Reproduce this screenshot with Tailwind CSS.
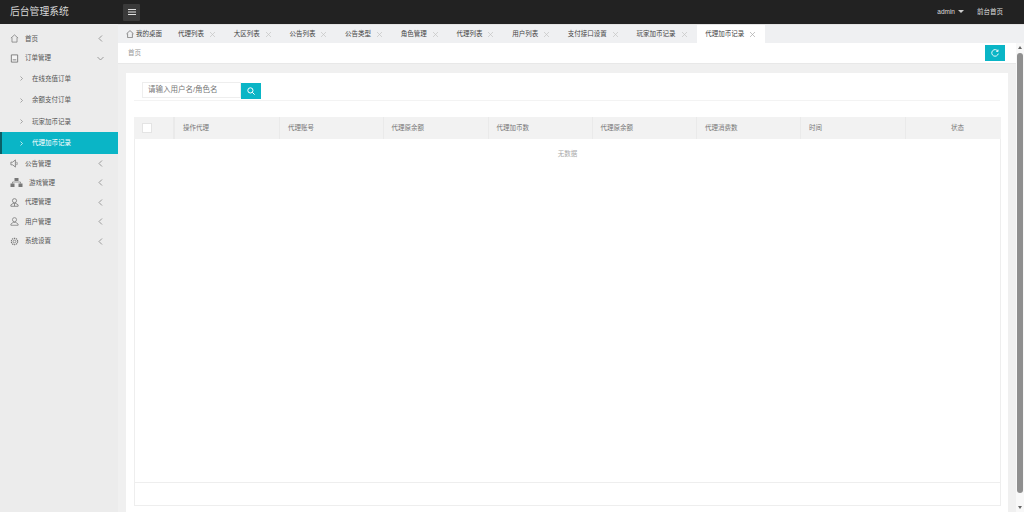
<!DOCTYPE html>
<html lang="zh">
<head>
<meta charset="utf-8">
<title>后台管理系统</title>
<script src="https://cdn.jsdelivr.net/npm/@tailwindcss/browser@4"></script>
</head>
<body class="overflow-hidden">
<div class="flex h-[512px] w-[1024px] flex-col overflow-hidden bg-[#f0f0f0] font-['Liberation_Sans','Noto_Sans_CJK_SC',sans-serif] text-[6.5px] text-[#555]">
  <header class="flex h-6 shrink-0 items-center bg-[#222222] text-[#ddd]">
    <div class="w-[123px] pl-[10px] text-[9.8px] text-[#d8d8d8]">后台管理系统</div>
    <button class="flex h-[17px] w-[17px] items-center justify-center rounded-[1px] bg-[#3a3a3a]">
      <svg class="h-[8px] w-[8px]" viewBox="0 0 8 8" fill="none" stroke="#e0e0e0" stroke-width="1"><path d="M0 1.5h8M0 4h8M0 6.5h8"/></svg>
    </button>
    <div class="ml-auto flex items-center pr-[21px]">
      <span class="font-['Liberation_Sans',sans-serif] text-[6.5px]">admin</span>
      <span class="ml-[3px] mb-[1px] h-0 w-0 border-x-[3px] border-t-[3px] border-x-transparent border-t-[#ccc]"></span>
      <span class="ml-[13px]">前台首页</span>
    </div>
  </header>
  <div class="flex min-h-0 flex-1">
    <aside class="w-[118px] shrink-0 bg-[#ececec] pt-[5px]">
      <div class="flex h-[19.4px] items-center pl-[10px] pr-[15px]">
        <svg class="h-[9px] w-[9px] shrink-0" viewBox="0 0 10 10" fill="none" stroke="#777" stroke-width="0.8"><path d="M1 4.5 5 1l4 3.5M2.2 4v5h5.6V4"/></svg>
        <span class="ml-[6px]">首页</span>
        <svg class="ml-auto h-[7px] w-[5px]" viewBox="0 0 5 7" fill="none" stroke="#888" stroke-width="0.8"><path d="M4 .5 1 3.5l3 3"/></svg>
      </div>
      <div class="flex h-[19.4px] items-center pl-[10px] pr-[14px]">
        <svg class="h-[9px] w-[9px] shrink-0" viewBox="0 0 10 10" fill="#f4f4f4" stroke="#777" stroke-width="1"><path d="M1.5 1h7v8h-7zM3 6.5h4"/></svg>
        <span class="ml-[6px]">订单管理</span>
        <svg class="ml-auto h-[5px] w-[7px]" viewBox="0 0 7 5" fill="none" stroke="#888" stroke-width="0.8"><path d="M.5 1 3.5 4l3-3"/></svg>
      </div>
      <div class="flex h-[21.5px] items-center pl-[20px]">
        <svg class="h-[5px] w-[3px]" viewBox="0 0 3 5" fill="none" stroke="#888" stroke-width="0.7"><path d="M.5.5l2 2-2 2"/></svg>
        <span class="ml-[9px]">在线充值订单</span>
      </div>
      <div class="flex h-[21.5px] items-center pl-[20px]">
        <svg class="h-[5px] w-[3px]" viewBox="0 0 3 5" fill="none" stroke="#888" stroke-width="0.7"><path d="M.5.5l2 2-2 2"/></svg>
        <span class="ml-[9px]">余额支付订单</span>
      </div>
      <div class="flex h-[21.5px] items-center pl-[20px]">
        <svg class="h-[5px] w-[3px]" viewBox="0 0 3 5" fill="none" stroke="#888" stroke-width="0.7"><path d="M.5.5l2 2-2 2"/></svg>
        <span class="ml-[9px]">玩家加币记录</span>
      </div>
      <div class="flex h-[21.5px] items-center border-l-2 border-l-[#0a5f66] bg-[#0ab5c6] pl-[18px] text-white">
        <svg class="h-[5px] w-[3px]" viewBox="0 0 3 5" fill="none" stroke="#fff" stroke-width="0.7"><path d="M.5.5l2 2-2 2"/></svg>
        <span class="ml-[9px]">代理加币记录</span>
      </div>
      <div class="flex h-[19.4px] items-center pl-[10px] pr-[15px]">
        <svg class="h-[9px] w-[9px] shrink-0" viewBox="0 0 10 10" fill="none" stroke="#777" stroke-width="0.9"><path d="M1 3.5h2L6 1v8L3 6.5H1zM7.5 3.2q1 1.8 0 3.6"/></svg>
        <span class="ml-[6px]">公告管理</span>
        <svg class="ml-auto h-[7px] w-[5px]" viewBox="0 0 5 7" fill="none" stroke="#888" stroke-width="0.8"><path d="M4 .5 1 3.5l3 3"/></svg>
      </div>
      <div class="flex h-[19.4px] items-center pl-[10px] pr-[15px]">
        <svg class="h-[9px] w-[13px] shrink-0" viewBox="0 0 13 9" fill="#777"><path d="M4.5 0h4v3h-4zM.5 5.5h4V9h-4zM8.5 5.5h4V9h-4z"/><path d="M2.5 5.5V4h8v1.5" fill="none" stroke="#777" stroke-width=".7"/></svg>
        <span class="ml-[6px]">游戏管理</span>
        <svg class="ml-auto h-[7px] w-[5px]" viewBox="0 0 5 7" fill="none" stroke="#888" stroke-width="0.8"><path d="M4 .5 1 3.5l3 3"/></svg>
      </div>
      <div class="flex h-[19.4px] items-center pl-[10px] pr-[15px]">
        <svg class="h-[9px] w-[9px] shrink-0" viewBox="0 0 10 10" fill="none" stroke="#777" stroke-width="0.9"><circle cx="5" cy="3" r="2.3"/><path d="M1 9.2V7.6L3.5 6h3L9 7.6v1.6zM5 6.5v2.5"/></svg>
        <span class="ml-[6px]">代理管理</span>
        <svg class="ml-auto h-[7px] w-[5px]" viewBox="0 0 5 7" fill="none" stroke="#888" stroke-width="0.8"><path d="M4 .5 1 3.5l3 3"/></svg>
      </div>
      <div class="flex h-[19.4px] items-center pl-[10px] pr-[15px]">
        <svg class="h-[9px] w-[9px] shrink-0" viewBox="0 0 10 10" fill="none" stroke="#777" stroke-width="0.8"><circle cx="5" cy="3" r="2.3"/><path d="M1 9.2V7.8L3.5 6h3L9 7.8v1.4z"/></svg>
        <span class="ml-[6px]">用户管理</span>
        <svg class="ml-auto h-[7px] w-[5px]" viewBox="0 0 5 7" fill="none" stroke="#888" stroke-width="0.8"><path d="M4 .5 1 3.5l3 3"/></svg>
      </div>
      <div class="flex h-[19.4px] items-center pl-[10px] pr-[15px]">
        <svg class="h-[9px] w-[9px] shrink-0" viewBox="0 0 10 10" fill="none" stroke="#777"><circle cx="5" cy="5" r="1.5" stroke-width=".8"/><circle cx="5" cy="5" r="3.5" stroke-width="1.3" stroke-dasharray="1.4 .8"/></svg>
        <span class="ml-[6px]">系统设置</span>
        <svg class="ml-auto h-[7px] w-[5px]" viewBox="0 0 5 7" fill="none" stroke="#888" stroke-width="0.8"><path d="M4 .5 1 3.5l3 3"/></svg>
      </div>
    </aside>
    <main class="flex min-w-0 flex-1 flex-col">
      <nav class="flex h-[19px] shrink-0 items-end border-t border-t-[#e4e4e4] bg-[#eff0f2] text-[#444]">
        <div class="flex h-[18px] w-[52px] items-center pl-[8px]">
          <svg class="h-[8px] w-[8px] shrink-0" viewBox="0 0 8 8" fill="none" stroke="#666" stroke-width=".7"><path d="M.5 3.8 4 .6l3.5 3.2M1.6 3.4v4.2h4.8V3.4"/></svg>
          <span class="ml-[2px]">我的桌面</span>
        </div>
        <div class="flex h-[18px] items-center pl-[8px] pr-[9.7px]"><span>代理列表</span><svg class="ml-[5px] h-[7px] w-[7px]" viewBox="0 0 7 7" stroke="#c4c4c4" stroke-width=".7"><path d="M1 1l5 5M6 1 1 6"/></svg></div>
        <div class="flex h-[18px] items-center pl-[8px] pr-[9.7px]"><span>大区列表</span><svg class="ml-[5px] h-[7px] w-[7px]" viewBox="0 0 7 7" stroke="#c4c4c4" stroke-width=".7"><path d="M1 1l5 5M6 1 1 6"/></svg></div>
        <div class="flex h-[18px] items-center pl-[8px] pr-[9.7px]"><span>公告列表</span><svg class="ml-[5px] h-[7px] w-[7px]" viewBox="0 0 7 7" stroke="#c4c4c4" stroke-width=".7"><path d="M1 1l5 5M6 1 1 6"/></svg></div>
        <div class="flex h-[18px] items-center pl-[8px] pr-[9.7px]"><span>公告类型</span><svg class="ml-[5px] h-[7px] w-[7px]" viewBox="0 0 7 7" stroke="#c4c4c4" stroke-width=".7"><path d="M1 1l5 5M6 1 1 6"/></svg></div>
        <div class="flex h-[18px] items-center pl-[8px] pr-[9.7px]"><span>角色管理</span><svg class="ml-[5px] h-[7px] w-[7px]" viewBox="0 0 7 7" stroke="#c4c4c4" stroke-width=".7"><path d="M1 1l5 5M6 1 1 6"/></svg></div>
        <div class="flex h-[18px] items-center pl-[8px] pr-[9.7px]"><span>代理列表</span><svg class="ml-[5px] h-[7px] w-[7px]" viewBox="0 0 7 7" stroke="#c4c4c4" stroke-width=".7"><path d="M1 1l5 5M6 1 1 6"/></svg></div>
        <div class="flex h-[18px] items-center pl-[8px] pr-[9.7px]"><span>用户列表</span><svg class="ml-[5px] h-[7px] w-[7px]" viewBox="0 0 7 7" stroke="#c4c4c4" stroke-width=".7"><path d="M1 1l5 5M6 1 1 6"/></svg></div>
        <div class="flex h-[18px] items-center pl-[8px] pr-[9.7px]"><span>支付接口设置</span><svg class="ml-[5px] h-[7px] w-[7px]" viewBox="0 0 7 7" stroke="#c4c4c4" stroke-width=".7"><path d="M1 1l5 5M6 1 1 6"/></svg></div>
        <div class="flex h-[18px] items-center pl-[8px] pr-[9.7px]"><span>玩家加币记录</span><svg class="ml-[5px] h-[7px] w-[7px]" viewBox="0 0 7 7" stroke="#c4c4c4" stroke-width=".7"><path d="M1 1l5 5M6 1 1 6"/></svg></div>
        <div class="flex h-[18px] items-center bg-white pl-[8px] pr-[9px]"><span>代理加币记录</span><svg class="ml-[5px] h-[7px] w-[7px]" viewBox="0 0 7 7" stroke="#aaa" stroke-width=".7"><path d="M1 1l5 5M6 1 1 6"/></svg></div>
      </nav>
      <div class="flex min-h-0 flex-1">
        <div class="min-w-0 flex-1 overflow-hidden">
          <div class="flex h-[21px] items-center justify-between border-b border-b-[#e8e8e8] bg-white pl-[10px] pr-[11px] text-[#999]">
            <span>首页</span>
            <button class="flex h-[16px] w-[20px] items-center justify-center bg-[#0ab5c6]">
              <svg class="h-[8px] w-[8px]" viewBox="0 0 8 8" fill="none" stroke="#fff" stroke-width=".9"><path d="M6.9 2.2A3.3 3.3 0 1 0 7.3 4.6M7 .6v1.8H5.2"/></svg>
            </button>
          </div>
          <section class="ml-[8px] mr-[8px] mt-[9px] h-[450px] bg-white px-[8px] pt-[9px]">
            <div class="flex h-[19px] items-start border-b border-b-[#f3f3f3] pl-[8px]">
              <div class="flex h-[16px] w-[99px] items-center border border-[#eeeeee] pl-[5px] text-[7.5px] text-[#777]">请输入用户名/角色名</div>
              <button class="mt-[1px] flex h-[16px] w-[20px] items-center justify-center bg-[#0ab5c6]">
                <svg class="h-[8px] w-[8px]" viewBox="0 0 8 8" fill="none" stroke="#fff" stroke-width="1"><circle cx="3.4" cy="3.4" r="2.6"/><path d="M5.3 5.3 7.6 7.6"/></svg>
              </button>
            </div>
            <div class="mt-[16px] flex h-[389px] w-[867px] flex-col border border-t-0 border-[#eeeeee]">
              <div class="ml-[-1px] mr-[-1px] flex h-[21.5px] shrink-0 items-center bg-[#f2f2f2] text-[#777]">
                <div class="flex h-full w-[41px] items-center border-r-2 border-r-[#eaeaea] pl-[8px]"><span class="h-[10px] w-[10px] border border-[#e4e4e4] bg-white"></span></div>
                <div class="flex h-full w-[105px] items-center border-r border-r-[#eaeaea] pl-[8px]">操作代理</div>
                <div class="flex h-full w-[103.5px] items-center border-r border-r-[#eaeaea] pl-[8px]">代理账号</div>
                <div class="flex h-full w-[105px] items-center border-r border-r-[#eaeaea] pl-[8px]">代理原余额</div>
                <div class="flex h-full w-[104px] items-center border-r border-r-[#eaeaea] pl-[8px]">代理加币数</div>
                <div class="flex h-full w-[104.5px] items-center border-r border-r-[#eaeaea] pl-[8px]">代理原余额</div>
                <div class="flex h-full w-[104px] items-center border-r border-r-[#eaeaea] pl-[8px]">代理消费数</div>
                <div class="flex h-full w-[105px] items-center border-r border-r-[#eaeaea] pl-[8px]">时间</div>
                <div class="flex h-full w-[95px] items-center justify-center pl-[8px]">状态</div>
              </div>
              <div class="min-h-0 flex-1 pt-[10px] text-center text-[#aaa]">无数据</div>
              <div class="h-[23px] shrink-0 border-t border-t-[#eeeeee]"></div>
            </div>
          </section>
        </div>
        <div class="flex w-2 shrink-0 flex-col items-center bg-[#f8f8f8] pt-[3px] pb-[3px]">
          <span class="h-0 w-0 border-x-[2.5px] border-b-[3px] border-x-transparent border-b-[#666]"></span>
          <span class="mt-[4px] w-[5.5px] flex-1 rounded-full bg-[#8f8f8f]"></span>
          <span class="mt-[13px] h-0 w-0 border-x-[2.5px] border-t-[3px] border-x-transparent border-t-[#666]"></span>
        </div>
      </div>
    </main>
  </div>
</div>
</body>
</html>
